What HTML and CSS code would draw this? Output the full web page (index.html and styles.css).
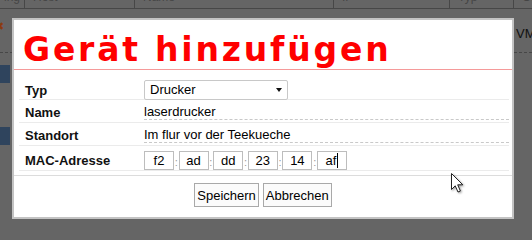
FILE: index.html
```html
<!DOCTYPE html>
<html lang="de">
<head>
    <meta charset="UTF-8">
    <title>Gerät hinzufügen</title>
    <link rel="stylesheet" href="styles.css">
</head>
<body>
    <div class="backdrop">
        <div class="bg-head">
            <span class="bg-cell bg-first"><span>Ping</span></span>
            <span class="bg-cell"><span>Host</span></span>
            <span class="bg-cell"><span>Name</span></span>
            <span class="bg-cell"><span>IP</span></span>
            <span class="bg-cell"><span>Typ</span></span>
            <span class="bg-cell"><span>Ort</span></span>
        </div>
        <div class="bg-row bg-row-first">
            <span class="bg-del">✖</span>
            <span class="bg-type">VMware</span>
        </div>
        <div class="bg-row bg-row-tall">
            <span class="bg-btn"></span>
        </div>
        <div class="bg-row">
            <span class="bg-btn"></span>
        </div>
    </div>

    <div class="dialog">
        <h1 class="dialog-title">Gerät hinzufügen</h1>

        <div class="form">
            <div class="form-row row-typ">
                <label class="form-label">Typ</label>
                <div class="select">
                    <span>Drucker</span>
                    <span class="select-arrow"></span>
                </div>
            </div>
            <div class="form-row">
                <label class="form-label">Name</label>
                <div class="text-input">laserdrucker</div>
            </div>
            <div class="form-row">
                <label class="form-label">Standort</label>
                <div class="text-input">Im flur vor der Teekueche</div>
            </div>
            <div class="form-row row-mac">
                <label class="form-label">MAC-Adresse</label>
                <div class="mac">
                    <span class="mac-box">f2</span><span class="mac-sep">:</span>
                    <span class="mac-box">ad</span><span class="mac-sep">:</span>
                    <span class="mac-box">dd</span><span class="mac-sep">:</span>
                    <span class="mac-box">23</span><span class="mac-sep">:</span>
                    <span class="mac-box">14</span><span class="mac-sep">:</span>
                    <span class="mac-box">af<span class="caret"></span></span>
                </div>
            </div>
        </div>

        <div class="dialog-buttons">
            <button type="button" class="btn">Speichern</button>
            <button type="button" class="btn">Abbrechen</button>
        </div>
    </div>

    <svg class="cursor" width="14" height="22" viewBox="0 0 14 22">
        <path d="M1.5 1.5 L1.5 17.5 L5.2 13.8 L8 20 L10.4 19 L7.7 12.8 L12.8 12.8 Z" fill="#fff" stroke="#222" stroke-width="1" stroke-linejoin="miter"/>
    </svg>
</body>
</html>
```

FILE: styles.css
```css
body {
  margin: 0;
  background: #656565;
  font-family: "Liberation Sans", Arial, sans-serif;
  font-size: 13px;
  color: #000;
}

/* page behind the dialog */
.backdrop {
  height: 240px;
  overflow: hidden;
  white-space: nowrap;
}

.bg-head {
  display: grid;
  grid-template-columns: 24px 110px 199px 116px 64px 1fr;
  height: 8px;
  border-bottom: 1px solid #474747;
}

.bg-cell {
  display: flex;
  overflow: hidden;
  padding-left: 8px;
  border-left: 1px solid #474747;
}

.bg-cell span {
  display: block;
  margin-top: -9px;
  line-height: 12px;
  font-size: 12px;
  color: #454545;
}

.bg-first {
  border-left: 0;
  padding-left: 0;
  padding-right: 4px;
  justify-content: flex-end;
}

.bg-row {
  display: grid;
  grid-template-columns: 24px 110px 199px 116px 64px 1fr;
  align-items: start;
}

.bg-row-first {
  height: 43px;
  border-bottom: 1px dashed #474747;
}

.bg-del {
  margin: 12px 0 0 -5px;
  font-family: "DejaVu Sans", sans-serif;
  font-size: 11px;
  line-height: 11px;
  color: #8a3b10;
}

.bg-type {
  grid-column: 6;
  margin: 17px 0 0 3px;
  color: #111;
}

.bg-row-tall {
  height: 62px;
}

.bg-btn {
  display: block;
  width: 10px;
  height: 18px;
  margin-top: 12px;
  background: #2f445d;
}

/* dialog */
.dialog {
  position: absolute;
  left: 12px;
  top: 18px;
  width: 498px;
  height: 197px;
  border: 2px solid #c3c3c3;
  background: #fff;
  display: flex;
  flex-direction: column;
}

.dialog-title {
  margin: 0;
  padding: 11px 0 0 9px;
  height: 38px;
  line-height: 38px;
  border-bottom: 1px solid #f59a9a;
  font-family: "DejaVu Sans", sans-serif;
  font-size: 33px;
  font-weight: bold;
  letter-spacing: 2.8px;
  color: #f00;
}

.form {
  margin: 7px 3px 0 5px;
}

.form-row {
  display: grid;
  grid-template-columns: 125px 1fr;
  align-items: end;
  height: 22px;
  border-bottom: 1px solid #ebebeb;
}

.form-label {
  padding: 0 0 2px 6px;
  line-height: 15px;
  font-weight: bold;
  color: #111;
}

.row-typ {
  align-items: start;
}

.row-typ .form-label {
  align-self: end;
}

.select {
  display: flex;
  align-items: center;
  justify-content: space-between;
  width: 137px;
  height: 18px;
  margin-top: 3px;
  padding-left: 5px;
  border: 1px solid #c8c8c8;
  border-radius: 2px;
  background: #fff;
  line-height: 18px;
  position: relative;
  z-index: 1;
}

.select-arrow {
  width: 0;
  height: 0;
  margin-right: 5px;
  border-left: 3.5px solid transparent;
  border-right: 3.5px solid transparent;
  border-top: 4px solid #111;
}

.text-input {
  margin-bottom: 2px;
  line-height: 15px;
  border-bottom: 1px dashed #c9c9c9;
}

.row-mac {
  height: 24px;
  align-items: start;
}

.row-mac .form-label {
  align-self: end;
}

.mac {
  display: flex;
  align-items: flex-end;
  margin-top: 5px;
}

.mac-box {
  width: 28px;
  height: 17px;
  border: 1px solid #bdbdbd;
  line-height: 17px;
  text-align: center;
}

.mac-sep {
  width: 4.6px;
  line-height: 15px;
  font-size: 11px;
  color: #9a9a9a;
  text-align: center;
}

.caret {
  display: inline-block;
  width: 1px;
  height: 15px;
  margin-left: 1px;
  vertical-align: -3px;
  background: #000;
}

.dialog-buttons {
  display: flex;
  justify-content: center;
  gap: 4px;
  margin-top: 4px;
  padding-top: 7px;
  border-top: 1px solid #dcdcdc;
}

.btn {
  height: 24px;
  margin: 0;
  padding: 0 2px;
  border: 1px solid #a9a9a9;
  border-radius: 0;
  background: #fbfbfb;
  font-family: "Liberation Sans", Arial, sans-serif;
  font-size: 13px;
  color: #000;
}

.cursor {
  position: absolute;
  left: 450px;
  top: 172px;
  filter: drop-shadow(1px 1px 1px rgba(0, 0, 0, 0.4));
}
```
